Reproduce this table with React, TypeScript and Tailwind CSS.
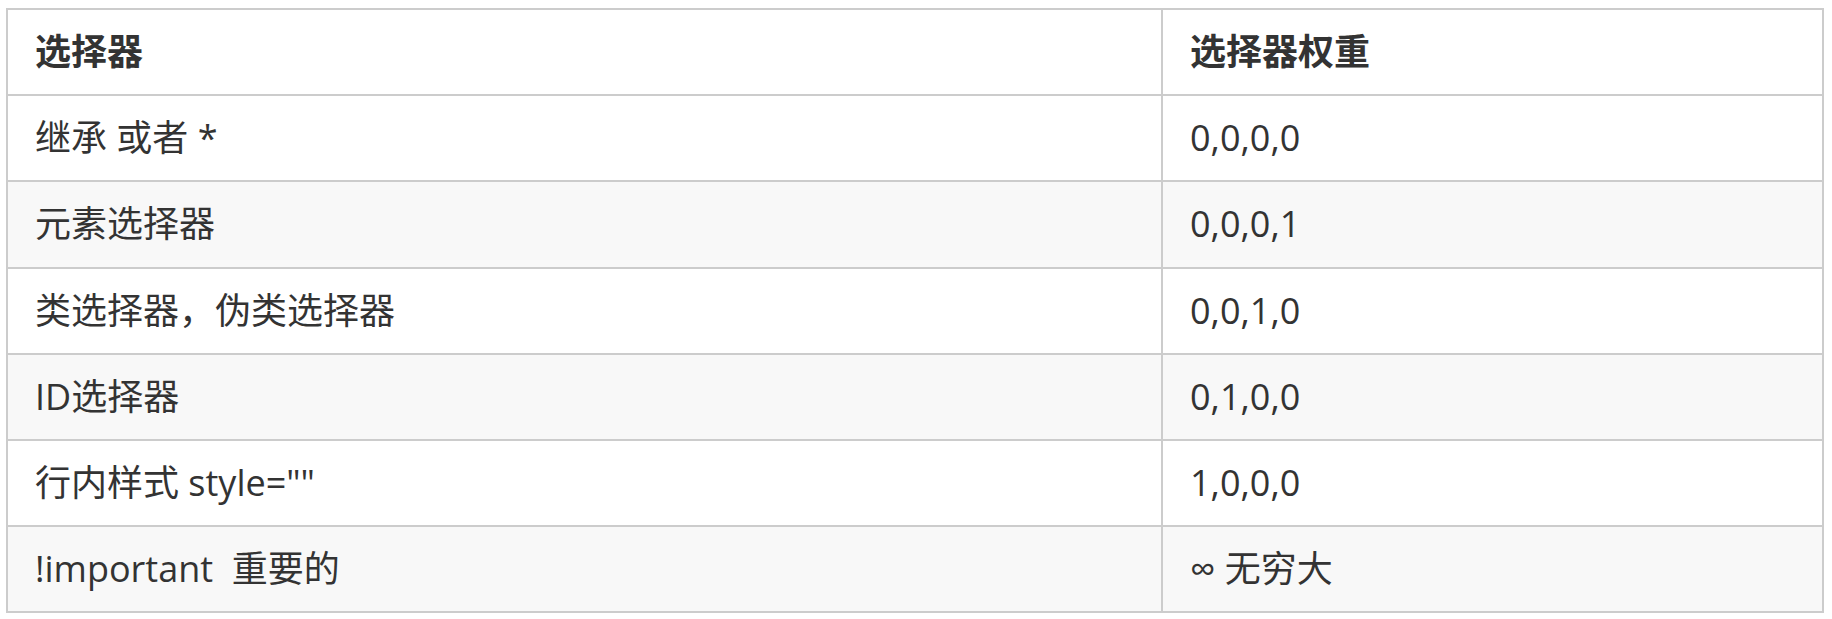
import React from 'react';

const rows = [
  ['继承 或者 *', '0,0,0,0'],
  ['元素选择器', '0,0,0,1'],
  ['类选择器，伪类选择器', '0,0,1,0'],
  ['ID选择器', '0,1,0,0'],
  ['行内样式 style=""', '1,0,0,0'],
  ['!important  重要的', '∞ 无穷大'],
];

const cell = 'border-2 border-[#cccccc] px-[27px] h-[86.2px] align-middle text-left whitespace-pre';

export default function App() {
  return (
    <div
      className="min-h-[619px] bg-white pl-[6px] pt-[8px] text-[#333333] text-[36px]"
      style={{ fontFamily: '"Open Sans", "Noto Sans CJK SC", sans-serif' }}
    >
      <table className="w-[1818px] table-fixed border-collapse">
        <colgroup>
          <col className="w-[1155px]" />
          <col />
        </colgroup>
        <thead>
          <tr className="bg-white">
            <th className={clsxCell('font-bold')}>选择器</th>
            <th className={clsxCell('font-bold')}>选择器权重</th>
          </tr>
        </thead>
        <tbody>
          {rows.map(([sel, weight], i) => (
            <tr key={sel} className={i % 2 === 1 ? 'bg-[#f8f8f8]' : 'bg-white'}>
              <td className={clsxCell('font-normal')}>{sel}</td>
              <td className={clsxCell('font-normal')}>{weight}</td>
            </tr>
          ))}
        </tbody>
      </table>
    </div>
  );
}

function clsxCell(extra: string) {
  return cell + ' ' + extra;
}
